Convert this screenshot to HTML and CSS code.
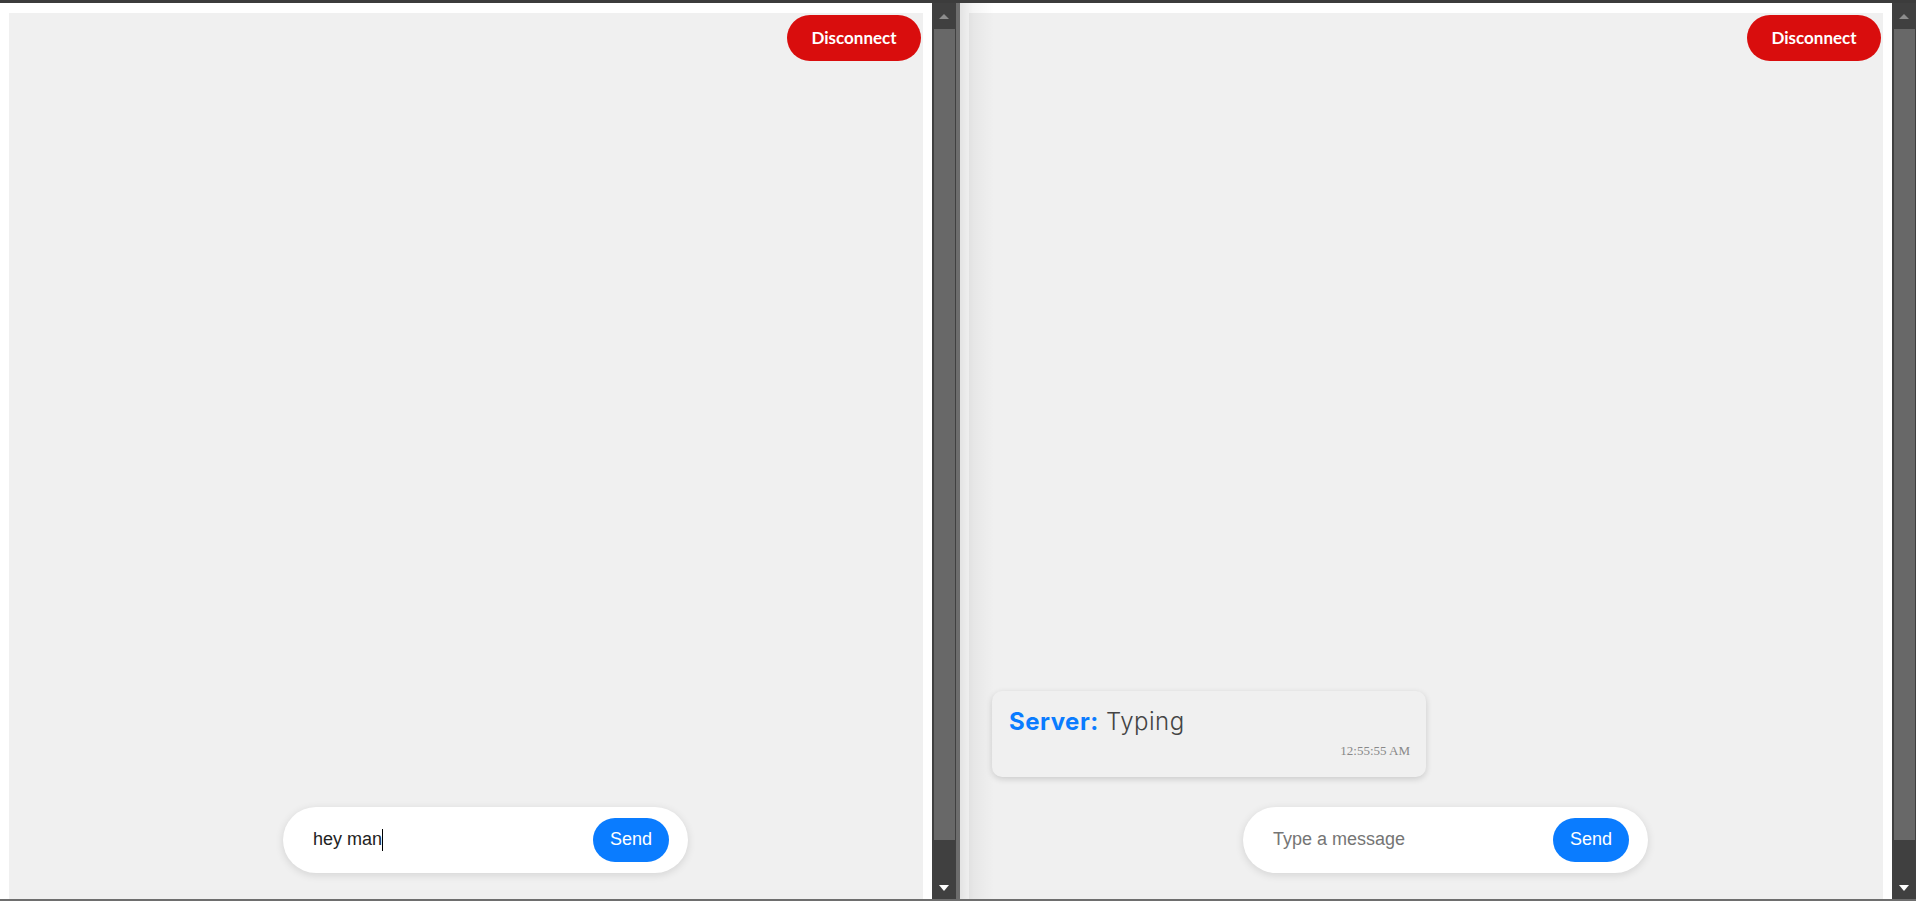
FILE: index.html
```html
<!DOCTYPE html>
<html>
<head>
<meta charset="utf-8">
<link rel="stylesheet" href="styles.css">
</head>
<body>
<div class="screen">
  <div class="topbar"></div>
  <div class="panes">
    <div class="pane">
      <div class="viewport">
        <div class="chat">
          <div class="chat-head"><button class="disconnect">Disconnect</button></div>
          <div class="messages"></div>
          <div class="composer">
            <div class="field typed">hey man<span class="caret"></span></div>
            <button class="send">Send</button>
          </div>
        </div>
      </div>
      <div class="scrollbar">
        <div class="sb-btn"><span class="arrow-up"></span></div>
        <div class="sb-thumb"></div>
        <div class="sb-rest"></div>
        <div class="sb-btn sb-down"><span class="arrow-down"></span></div>
      </div>
    </div>
    <div class="divider"></div>
    <div class="pane pane-shadow">
      <div class="viewport">
        <div class="chat">
          <div class="chat-head"><button class="disconnect">Disconnect</button></div>
          <div class="messages">
            <div class="card">
              <div class="card-line"><span class="sender">Server:</span> <span class="body">Typing</span></div>
              <div class="stamp">12:55:55 AM</div>
            </div>
          </div>
          <div class="composer">
            <div class="field placeholder">Type a message</div>
            <button class="send">Send</button>
          </div>
        </div>
      </div>
      <div class="scrollbar">
        <div class="sb-btn"><span class="arrow-up"></span></div>
        <div class="sb-thumb"></div>
        <div class="sb-rest"></div>
        <div class="sb-btn sb-down"><span class="arrow-down"></span></div>
      </div>
    </div>
  </div>
  <div class="bottomline"></div>
</div>
</body>
</html>
```

FILE: styles.css
```css
* { box-sizing: border-box; }
html, body { margin: 0; padding: 0; }
body { background: #3c3c3c; font-family: "Liberation Sans", Arial, sans-serif; overflow: hidden; }

.screen { width: 1916px; height: 901px; display: flex; flex-direction: column; }
.topbar { height: 3px; background: #3c3c3c; flex: none; }
.bottomline { height: 2px; background: #6e6e6e; flex: none; }
.panes { height: 896px; display: flex; flex: none; }

.pane { width: 956px; display: flex; position: relative; flex: none; }
.divider { width: 4px; background: #6d6d6d; flex: none; }
.pane-shadow::before {
  content: ""; position: absolute; left: 0; top: 0; bottom: 0; width: 34px;
  background: linear-gradient(to right, rgba(0,0,0,0.11), rgba(0,0,0,0.04) 40%, rgba(0,0,0,0));
  pointer-events: none; z-index: 2;
}

.viewport { flex: 1; background: #fff; padding: 10px 9px 0 9px; overflow: hidden; }
.chat { background: #f0f0f0; height: 886px; display: flex; flex-direction: column; }

.chat-head { display: flex; justify-content: flex-end; padding: 2px 2px 0 0; }
.disconnect {
  width: 134px; height: 46px; border: none; border-radius: 23px;
  background: #d90d0d; color: #fff; font-family: Lato, "Open Sans", sans-serif;
  font-weight: 700; font-size: 17px; padding: 0 0 2px; margin: 0;
}

.messages { flex: 1; display: flex; flex-direction: column; justify-content: flex-end; padding: 0 0 30px 23px; }
.card {
  width: 434px; height: 86px; background: #f0f0f0; border-radius: 10px;
  box-shadow: 0 2px 6px rgba(0,0,0,0.16); padding: 13px 16px 0 17px;
}
.card-line { font-family: Inter, "Open Sans", sans-serif; font-size: 24px; line-height: 36px; color: #333; letter-spacing: 0.5px; }
.sender { font-weight: 700; color: #0a7cff; }
.body { font-weight: 300; color: #444; }
.stamp { text-align: right; font-family: "Liberation Serif", "Times New Roman", serif; font-size: 13px; color: #888; margin-top: 3px; }

.composer {
  width: 405px; height: 66px; margin: 0 0 26px 274px; background: #fff; border-radius: 33px;
  box-shadow: 0 2px 8px rgba(0,0,0,0.12); display: flex; align-items: center;
  padding: 0 19px 0 30px;
}
.field { flex: 1; font-size: 18px; color: #222; display: flex; align-items: center; padding-bottom: 1px; }
.placeholder { color: #757575; }
.caret { display: inline-block; width: 1px; height: 22px; background: #000; margin-left: 0; }
.send {
  width: 76px; height: 44px; border: none; border-radius: 22px; background: #0a7cff;
  color: #fff; font-family: "Liberation Sans", Arial, sans-serif; font-size: 18px; padding: 0 0 2px;
}

.scrollbar { width: 24px; background: #404040; display: flex; flex-direction: column; flex: none; }
.sb-btn { height: 26px; display: flex; align-items: center; justify-content: center; flex: none; }
.sb-thumb { height: 811px; margin: 0 1px 0 2px; background: #686868; flex: none; }
.sb-rest { flex: 1; }
.arrow-up { width: 0; height: 0; border-left: 5px solid transparent; border-right: 5px solid transparent; border-bottom: 5px solid #8c8c8c; }
.arrow-down { width: 0; height: 0; border-left: 5.5px solid transparent; border-right: 5.5px solid transparent; border-top: 6px solid #fff; margin-top: 4px; }
```
